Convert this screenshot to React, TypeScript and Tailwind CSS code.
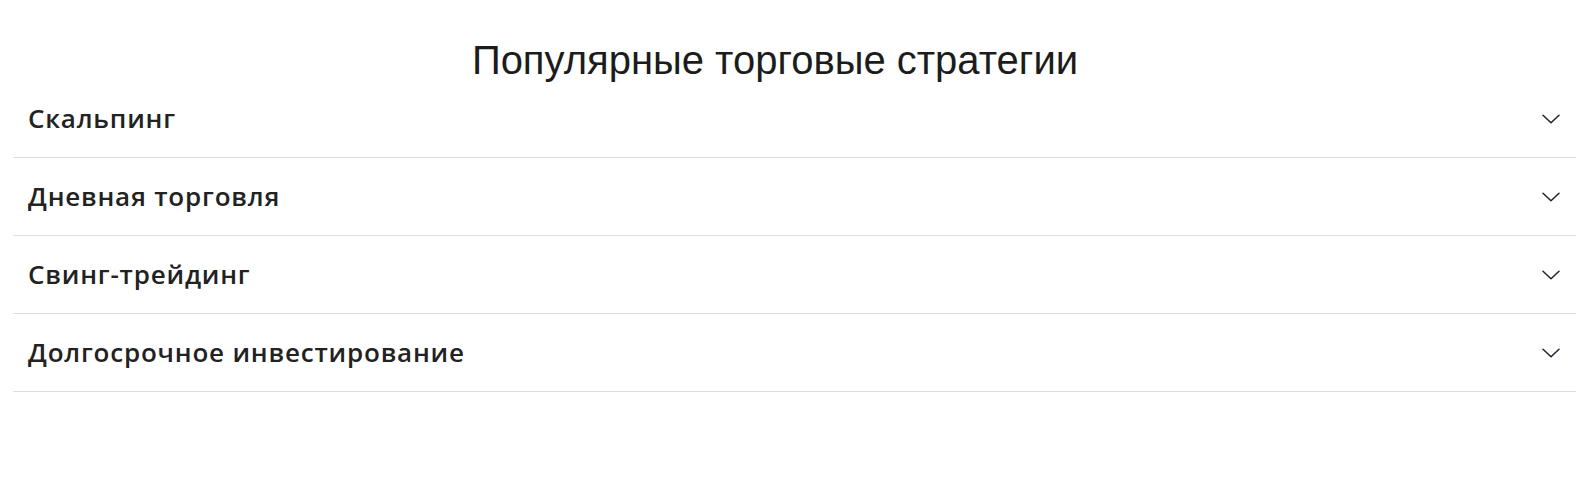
import React from "react";

const items = [
  "Скальпинг",
  "Дневная торговля",
  "Свинг-трейдинг",
  "Долгосрочное инвестирование",
];

function Chevron() {
  return (
    <svg width="18" height="10" viewBox="0 0 18 10" fill="none" className="shrink-0">
      <path d="M1 1.2 L9 8.8 L17 1.2" stroke="#1f2230" strokeWidth="1.5" strokeLinecap="round" strokeLinejoin="round" />
    </svg>
  );
}

export default function App() {
  return (
    <div className="min-h-[489px] bg-white pt-10" style={{ fontFamily: "'Open Sans', 'Noto Sans', sans-serif" }}>
      <h1
        className="text-center text-[40px] leading-10 text-[#1c1c1c] pr-[45px]"
        style={{ fontFamily: "'Liberation Sans', Arial, sans-serif" }}
      >
        Популярные торговые стратегии
      </h1>
      <div className="ml-[13px] mr-[19px]">
        {items.map((t) => (
          <div
            key={t}
            className="flex h-[78px] items-center justify-between border-b border-[#dedede] pl-[15px] pr-[16px]"
          >
            <span className="text-[26px] font-semibold tracking-[0.8px] text-[#222222]">{t}</span>
            <Chevron />
          </div>
        ))}
      </div>
    </div>
  );
}
